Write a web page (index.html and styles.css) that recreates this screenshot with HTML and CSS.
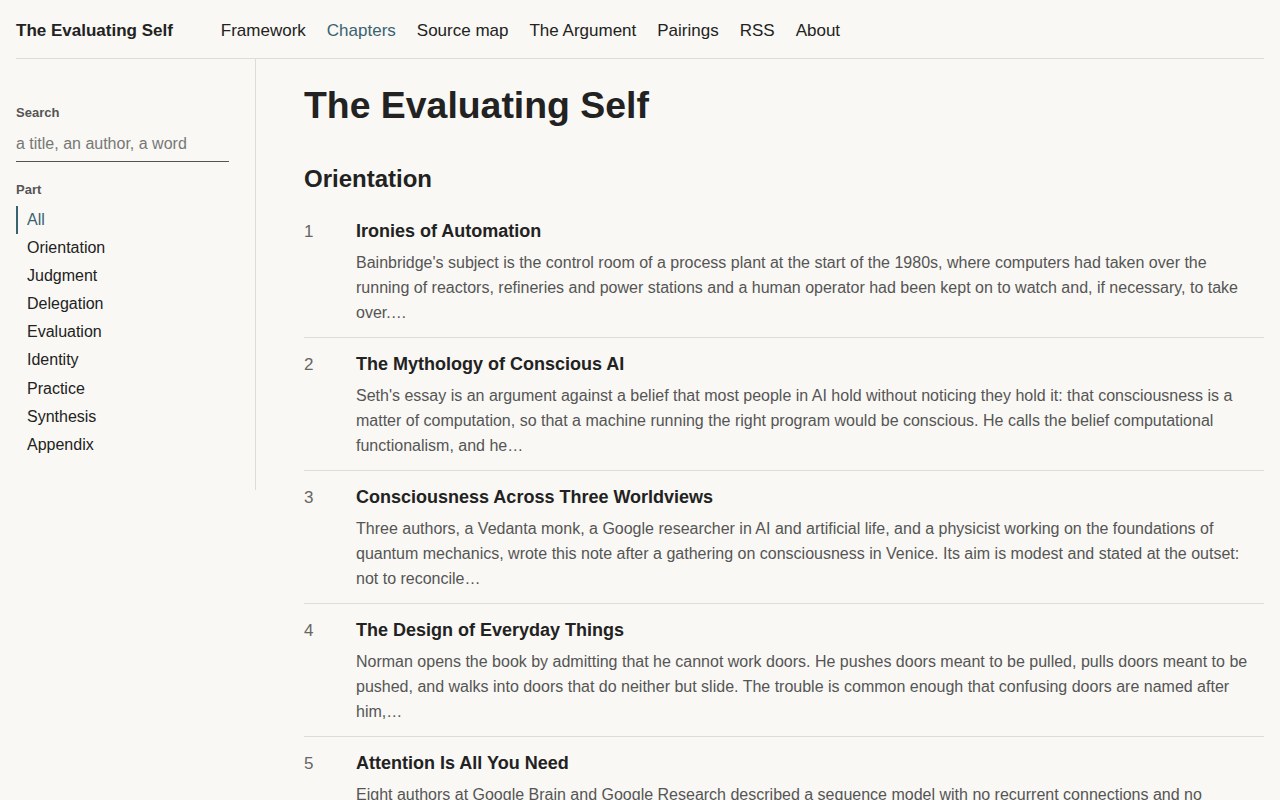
FILE: index.html
```html
<!DOCTYPE html>
<html lang="en">
<head>
<meta charset="utf-8">
<title>The Evaluating Self</title>
<link rel="stylesheet" href="styles.css">
</head>
<body>
<div class="page">
  <header class="site-header">
    <a class="brand" href="#">The Evaluating Self</a>
    <nav class="nav">
      <a href="#">Framework</a>
      <a href="#" class="current">Chapters</a>
      <a href="#">Source map</a>
      <a href="#">The Argument</a>
      <a href="#">Pairings</a>
      <a href="#">RSS</a>
      <a href="#">About</a>
    </nav>
  </header>
  <div class="layout">
    <aside class="sidebar">
      <label class="side-label" for="q">Search</label>
      <input id="q" class="search" type="text" placeholder="a title, an author, a word">
      <div class="side-label part-label">Part</div>
      <ul class="parts">
        <li class="active">All</li>
        <li>Orientation</li>
        <li>Judgment</li>
        <li>Delegation</li>
        <li>Evaluation</li>
        <li>Identity</li>
        <li>Practice</li>
        <li>Synthesis</li>
        <li>Appendix</li>
      </ul>
    </aside>
    <main class="main">
      <h1 class="title">The Evaluating Self</h1>
      <h2 class="part-title">Orientation</h2>
      <ol class="entries">
        <li class="entry">
          <span class="num">1</span>
          <div class="entry-body">
            <h3 class="entry-title">Ironies of Automation</h3>
            <p class="entry-desc">Bainbridge's subject is the control room of a process plant at the start of the 1980s, where computers had taken over the running of reactors, refineries and power stations and a human operator had been kept on to watch and, if necessary, to take over.…</p>
          </div>
        </li>
        <li class="entry">
          <span class="num">2</span>
          <div class="entry-body">
            <h3 class="entry-title">The Mythology of Conscious AI</h3>
            <p class="entry-desc">Seth's essay is an argument against a belief that most people in AI hold without noticing they hold it: that consciousness is a matter of computation, so that a machine running the right program would be conscious. He calls the belief computational functionalism, and he…</p>
          </div>
        </li>
        <li class="entry">
          <span class="num">3</span>
          <div class="entry-body">
            <h3 class="entry-title">Consciousness Across Three Worldviews</h3>
            <p class="entry-desc">Three authors, a Vedanta monk, a Google researcher in AI and artificial life, and a physicist working on the foundations of quantum mechanics, wrote this note after a gathering on consciousness in Venice. Its aim is modest and stated at the outset: not to reconcile…</p>
          </div>
        </li>
        <li class="entry">
          <span class="num">4</span>
          <div class="entry-body">
            <h3 class="entry-title">The Design of Everyday Things</h3>
            <p class="entry-desc">Norman opens the book by admitting that he cannot work doors. He pushes doors meant to be pulled, pulls doors meant to be pushed, and walks into doors that do neither but slide. The trouble is common enough that confusing doors are named after him,…</p>
          </div>
        </li>
        <li class="entry">
          <span class="num">5</span>
          <div class="entry-body">
            <h3 class="entry-title">Attention Is All You Need</h3>
            <p class="entry-desc">Eight authors at Google Brain and Google Research described a sequence model with no recurrent connections and no convolutions, built entirely on attention. The architecture, which they called the Transformer, trained faster and translated better…</p>
          </div>
        </li>
      </ol>
    </main>
  </div>
</div>
</body>
</html>
```

FILE: styles.css
```css
* { box-sizing: border-box; }
html, body {
  margin: 0;
  padding: 0;
  background: #f9f8f4;
  color: #222;
  font-family: "Liberation Sans", Arial, sans-serif;
}
.page {
  padding: 0 16px;
}
a { color: inherit; text-decoration: none; }

.site-header {
  display: flex;
  align-items: center;
  height: 59px;
  padding-top: 4px;
  border-bottom: 1px solid #dedcd6;
}
.brand {
  font-size: 17px;
  font-weight: 700;
  color: #222;
  line-height: 22px;
}
.nav {
  display: flex;
  gap: 21px;
  margin-left: 48px;
  font-size: 17px;
  line-height: 22px;
}
.nav a { color: #222; }
.nav a.current { color: #3a6371; }

.layout {
  display: grid;
  grid-template-columns: 240px 1fr;
  align-items: start;
}
.sidebar {
  border-right: 1px solid #dedcd6;
  padding: 46px 26px 31px 0;
}
.side-label {
  display: block;
  font-size: 13px;
  line-height: 16px;
  font-weight: 700;
  color: #555;
}
.search {
  display: block;
  width: 100%;
  margin-top: 7px;
  padding: 6px 0 7px;
  font-family: inherit;
  font-size: 16px;
  line-height: 20px;
  color: #222;
  background: transparent;
  border: 0;
  border-bottom: 1px solid #555;
  outline: none;
}
.search::placeholder { color: #777; }
.part-label { margin-top: 20px; }
.parts {
  list-style: none;
  margin: 8px 0 0;
  padding: 0;
}
.parts li {
  height: 28.1px;
  line-height: 28px;
  font-size: 16px;
  padding-left: 9px;
  border-left: 2px solid transparent;
  color: #222;
}
.parts li.active {
  border-left-color: #3a6371;
  color: #3a6371;
}

.main {
  padding: 24px 0 0 48px;
}
.title {
  margin: 0;
  font-size: 37.4px;
  line-height: 45px;
  font-weight: 700;
  color: #222;
}
.part-title {
  margin: 36px 0 0;
  font-size: 24px;
  line-height: 30px;
  font-weight: 700;
  color: #222;
}
.entries {
  list-style: none;
  margin: 11px 0 0;
  padding: 0;
}
.entry {
  display: flex;
  padding: 14px 0 12px;
  border-bottom: 1px solid #dedcd6;
}
.num {
  flex: 0 0 52px;
  font-size: 17px;
  line-height: 26px;
  color: #666;
}
.entry-body { flex: 1; min-width: 0; }
.entry-title {
  margin: 0;
  font-size: 18px;
  line-height: 24px;
  font-weight: 700;
  color: #222;
}
.entry-desc {
  margin: 7px 0 0;
  font-size: 16px;
  line-height: 25px;
  color: #555;
}
```
